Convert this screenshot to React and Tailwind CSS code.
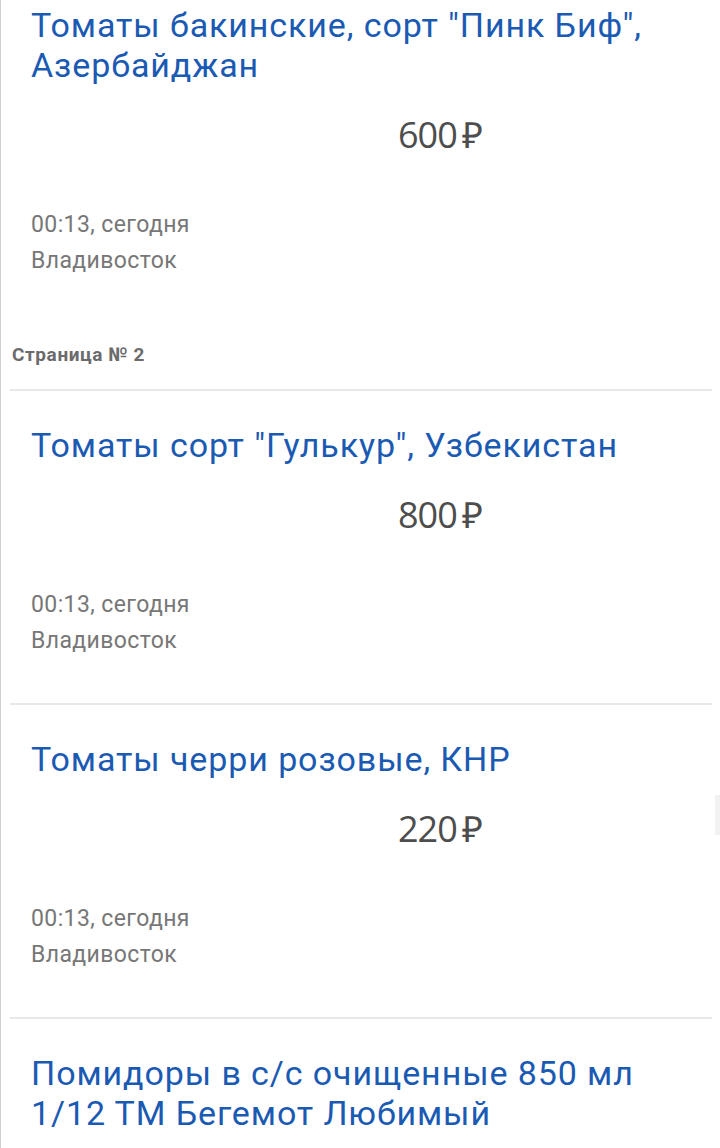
import React from 'react';

const items = [
  { title: 'Томаты бакинские, сорт "Пинк Биф", Азербайджан', price: '600' },
  { title: 'Томаты сорт "Гулькур", Узбекистан', price: '800' },
  { title: 'Томаты черри розовые, КНР', price: '220' },
  { title: 'Помидоры в с/с очищенные 850 мл 1/12 ТМ Бегемот Любимый', price: '380' },
];

const Item = ({ item, top, border }) => (
  <div className={`px-[21px] pb-[44px] ${top ? 'pt-[5px]' : 'pt-[34px]'} ${border ? 'border-t-2 border-[#e8e8e8]' : ''}`}>
    <div className="text-[34px] leading-[40px] tracking-[0.9px] text-[#1b5ab3] font-['Roboto',sans-serif]">
      {item.title}
    </div>
    <div className="mt-[26px] pl-[367px] text-[36px] leading-[48px] text-[#4d4d4d] font-['Open_Sans',sans-serif] tracking-[-1px]">
      {item.price}&thinsp;₽
    </div>
    <div className="mt-[48px] text-[23px] leading-[36px] tracking-[0.4px] text-[#777777] font-['Roboto',sans-serif]">
      <div>00:13, сегодня</div>
      <div>Владивосток</div>
    </div>
  </div>
);

export default function App() {
  return (
    <div className="relative h-[1148px] overflow-hidden bg-white border-l border-[#cfcfcf]">
      <div className="ml-[9px] mr-[8px]">
        <Item item={items[0]} top />
        <div className="pt-[20px] pb-[22px] pl-[2px] text-[19px] leading-[24px] tracking-[0.6px] font-bold text-[#6b6b6b] font-['Roboto',sans-serif]">
          Страница № 2
        </div>
        <Item item={items[1]} border />
        {items.slice(2).map((it, i) => (
          <Item key={i} item={it} border />
        ))}
      </div>
      <div className="absolute right-0 top-[795px] w-[5px] h-[40px] bg-[#f2f2f2]" />
    </div>
  );
}
